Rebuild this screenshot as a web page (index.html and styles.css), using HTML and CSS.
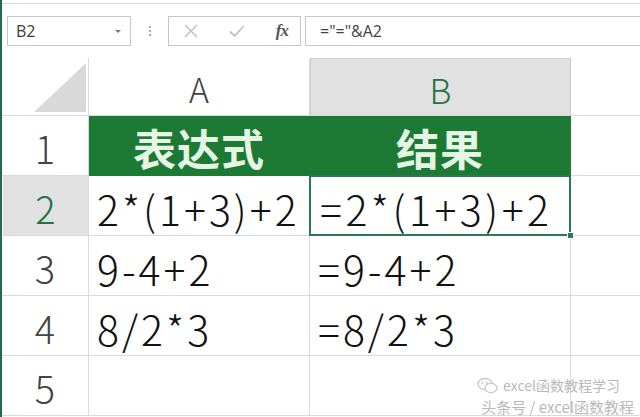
FILE: index.html
```html
<!DOCTYPE html>
<html lang="zh">
<head>
<meta charset="utf-8">
<title>Excel</title>
<link rel="stylesheet" href="styles.css">
</head>
<body>
<div class="app">
  <div class="topbar">
    <div class="namebox"><span>B2</span><span class="arrow"></span></div>
    <div class="sep"><i></i><i></i><i></i></div>
    <div class="buttons">
      <svg class="btn" width="16" height="16" viewBox="0 0 16 16"><path d="M2 2 L14 14 M14 2 L2 14" stroke="#c2c2c2" stroke-width="1.6" fill="none"/></svg>
      <svg class="btn" width="18" height="16" viewBox="0 0 18 16"><path d="M2 8.5 L6.5 13 L16 3" stroke="#c2c2c2" stroke-width="1.8" fill="none"/></svg>
      <span class="fx">fx</span>
    </div>
    <div class="formula">="="&amp;A2</div>
  </div>
  <div class="sheet">
    <div class="corner"><svg width="52" height="49" viewBox="0 0 52 49"><polygon points="52,0 52,49 0,49" fill="#d9d9d9"/></svg></div>
    <div class="colhead">A</div>
    <div class="colhead sel">B</div>
    <div class="colhead rest"></div>

    <div class="rowhead">1</div>
    <div class="cell title">表达式</div>
    <div class="cell title">结果</div>
    <div class="cell rest"></div>

    <div class="rowhead sel">2</div>
    <div class="cell">2*(1+3)+2</div>
    <div class="cell active">=2*(1+3)+2<span class="handle"></span></div>
    <div class="cell rest"></div>

    <div class="rowhead">3</div>
    <div class="cell">9-4+2</div>
    <div class="cell">=9-4+2</div>
    <div class="cell rest"></div>

    <div class="rowhead">4</div>
    <div class="cell">8/2*3</div>
    <div class="cell">=8/2*3</div>
    <div class="cell rest"></div>

    <div class="rowhead">5</div>
    <div class="cell"></div>
    <div class="cell"></div>
    <div class="cell rest"></div>
  </div>
  <div class="watermark">
    <div class="wm1"><svg width="22" height="18" viewBox="0 0 22 18"><ellipse cx="8" cy="7" rx="7" ry="5.5" fill="none" stroke="#c8c8c8" stroke-width="1.3"/><ellipse cx="14" cy="11" rx="6" ry="4.6" fill="#fff" stroke="#c8c8c8" stroke-width="1.3"/><circle cx="5.5" cy="6" r="0.9" fill="#c8c8c8"/><circle cx="10" cy="6" r="0.9" fill="#c8c8c8"/></svg><span>excel函数教程学习</span></div>
    <div class="wm2">头条号 / excel函数教程</div>
  </div>
</div>
</body>
</html>
```

FILE: styles.css
```css
html, body {
  margin: 0;
  padding: 0;
  background: #ffffff;
}
body {
  width: 640px;
  height: 417px;
  overflow: hidden;
  font-family: "Noto Sans CJK SC", "Noto Sans", sans-serif;
}
.app {
  position: relative;
  width: 640px;
  height: 417px;
  box-sizing: border-box;
  border-left: 2px solid #2c6a47;
  overflow: hidden;
}
.topbar {
  margin-top: 3px;
  height: 55px;
  box-sizing: border-box;
  border-top: 1px solid #d9d9d9;
  padding: 12px 0 0 5px;
  display: flex;
  align-items: flex-start;
}
.namebox {
  width: 124px;
  height: 30px;
  box-sizing: border-box;
  border: 1px solid #c6c6c6;
  display: flex;
  align-items: center;
  justify-content: space-between;
  padding: 0 9px 0 8px;
  font-family: "Open Sans", "Noto Sans", sans-serif;
  font-size: 16px;
  color: #3a3a3a;
}
.arrow {
  width: 0;
  height: 0;
  border-left: 3px solid transparent;
  border-right: 3px solid transparent;
  border-top: 3px solid #777;
}
.sep {
  width: 37px;
  height: 30px;
  display: flex;
  flex-direction: column;
  align-items: center;
  justify-content: center;
  gap: 2px;
}
.sep i {
  display: block;
  width: 2px;
  height: 2px;
  background: #a8a8a8;
}
.buttons {
  width: 133px;
  height: 30px;
  box-sizing: border-box;
  border: 1px solid #c6c6c6;
  display: flex;
  align-items: center;
  justify-content: space-between;
  padding: 0 12px 0 14px;
}
.fx {
  font-family: "Liberation Serif", serif;
  font-style: italic;
  font-weight: bold;
  font-size: 17px;
  color: #555;
  letter-spacing: -1px;
}
.formula {
  flex: 1;
  margin-left: 4px;
  height: 30px;
  box-sizing: border-box;
  border: 1px solid #c6c6c6;
  border-right: none;
  padding-left: 14px;
  display: flex;
  align-items: center;
  font-family: "Open Sans", "Noto Sans", sans-serif;
  font-size: 16px;
  color: #444;
}
.sheet {
  display: grid;
  grid-template-columns: 87px 221px 261px 1fr;
  grid-template-rows: 58px repeat(5, 60px);
}
.corner {
  border-right: 1px solid #dadada;
  border-bottom: 1px solid #dadada;
  display: flex;
  align-items: flex-end;
  justify-content: flex-end;
  padding: 0 2px 3px 0;
}
.colhead {
  border-right: 1px solid #dadada;
  border-bottom: 1px solid #dadada;
  display: flex;
  align-items: center;
  justify-content: center;
  font-family: "Noto Sans CJK SC", sans-serif;
  font-weight: 300;
  font-size: 34px;
  color: #444;
  padding-top: 4px;
}
.colhead.sel {
  background: #e1e1e1;
  color: #217346;
  border-top: 1px solid #d0d0d0;
  border-left: 1px solid #d0d0d0;
  border-right: 1px solid #c8c8c8;
}
.colhead.rest {
  border-right: none;
}
.rowhead {
  border-right: 1px solid #dadada;
  border-bottom: 1px solid #dadada;
  display: flex;
  align-items: center;
  justify-content: center;
  font-weight: 300;
  font-size: 38px;
  color: #444;
  padding-top: 4px;
}
.rowhead.sel {
  background: #e1e1e1;
  color: #217346;
  margin-left: 1px;
}
.cell {
  position: relative;
  border-right: 1px solid #dadada;
  border-bottom: 1px solid #dadada;
  display: flex;
  align-items: center;
  padding: 5px 0 0 8px;
  font-weight: 300;
  font-size: 41px;
  letter-spacing: 3px;
  color: #111;
  white-space: nowrap;
}
.cell.rest {
  border-right: none;
}
.cell.title {
  background: #1d7a35;
  border-right-color: #1d7a35;
  border-bottom-color: #1d7a35;
  justify-content: center;
  padding: 2px 0 0 0;
  font-weight: bold;
  font-size: 43px;
  color: #e6f6e4;
  letter-spacing: 1px;
}
.cell.active {
  padding-left: 10px;
  letter-spacing: 3.5px;
}
.cell.active::after {
  content: "";
  position: absolute;
  left: -1px;
  top: -1px;
  right: -1px;
  bottom: -1px;
  border: 2px solid #2c7a4f;
}
.handle {
  position: absolute;
  right: -4px;
  bottom: -4px;
  width: 5px;
  height: 5px;
  background: #2c7a4f;
  border: 1px solid #ffffff;
  z-index: 2;
}
.watermark {
  position: absolute;
  right: 6px;
  bottom: 0;
  display: flex;
  flex-direction: column;
  align-items: flex-end;
  color: #b9b9b9;
}
.wm1 {
  display: flex;
  align-items: center;
  gap: 4px;
  margin-right: 14px;
  height: 21px;
  font-size: 14px;
  line-height: 21px;
}
.wm2 {
  height: 21px;
  font-size: 15px;
  line-height: 21px;
}
```
